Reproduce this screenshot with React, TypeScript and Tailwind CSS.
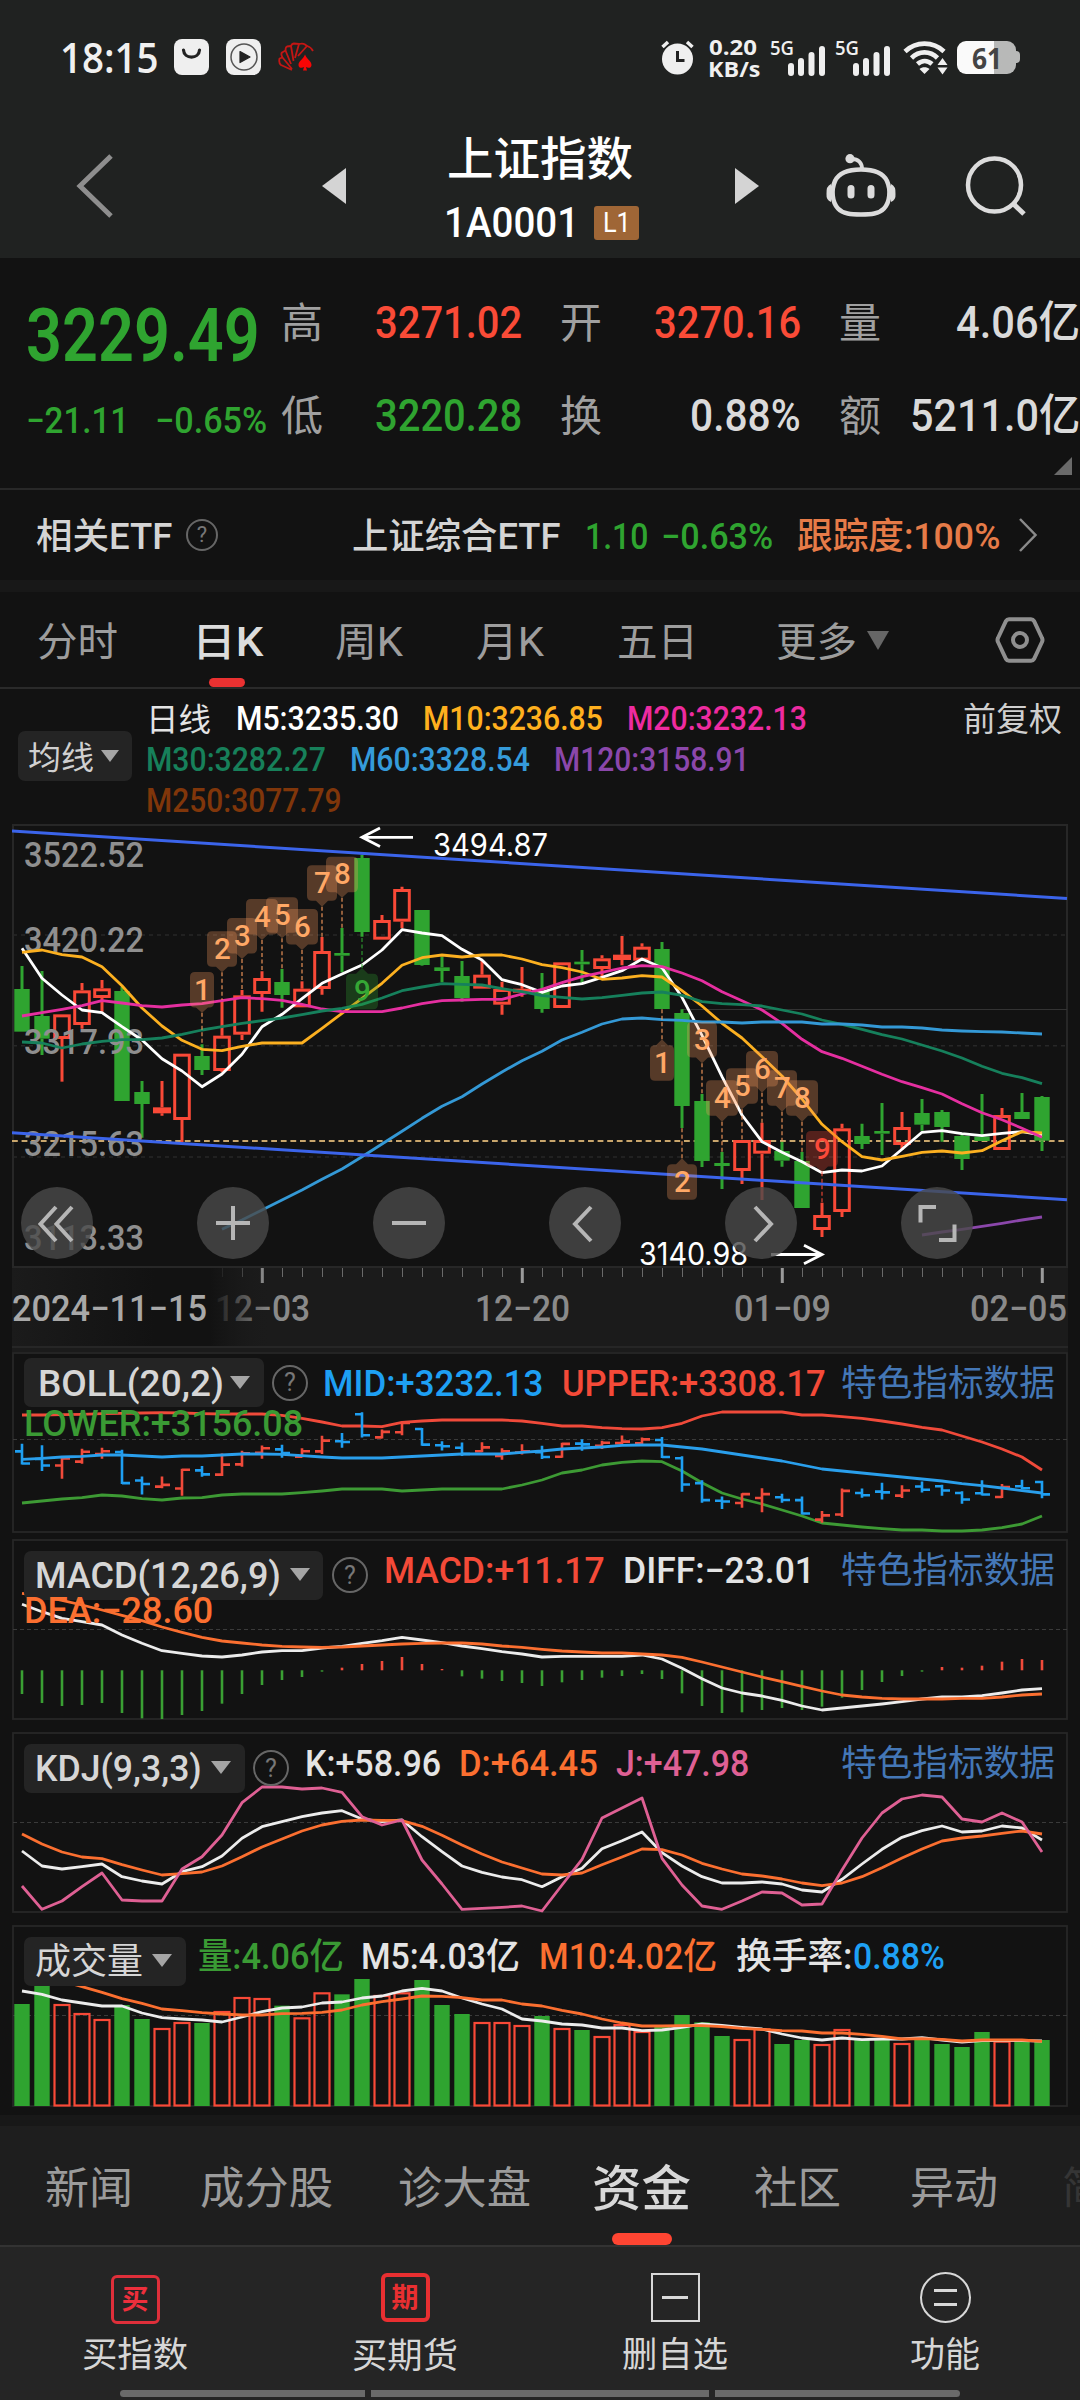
import React, { useLayoutEffect, useRef } from "react";
import type { ReactNode } from "react";

/* Squeezes a line of text to the width of its box. */
function Fit({ className, children }: { className: string; children: ReactNode }) {
  const box = useRef<HTMLSpanElement>(null);
  const text = useRef<HTMLSpanElement>(null);
  useLayoutEffect(() => {
    const b = box.current;
    const t = text.current;
    if (b && t && t.offsetWidth > 0) {
      t.style.transform = `scaleX(${b.clientWidth / t.offsetWidth})`;
    }
  });
  return (
    <span ref={box} className={`block shrink-0 whitespace-nowrap leading-none ${className}`}>
      <span ref={text} className="inline-block origin-left align-top leading-none">
        {children}
      </span>
    </span>
  );
}

const GREEN = "#2fa430";
const RED = "#f94937";

/* ---------- chart data: [up, high, bodyTop, bodyBottom, low] ---------- */
type Candle = [number, number, number, number, number];
const candles: Candle[] = [
  [0, 468, 537, 665, 665], [0, 483, 618, 686, 735], [1, 613, 613, 687, 815], [1, 519, 541, 645, 656],
  [1, 510, 535, 564, 605], [0, 530, 543, 873, 873], [0, 813, 846, 882, 983], [1, 813, 892, 910, 917],
  [1, 731, 731, 930, 997], [0, 703, 738, 780, 795], [1, 570, 677, 783, 787], [1, 540, 556, 674, 690],
  [1, 484, 504, 552, 605], [0, 477, 516, 555, 593], [1, 514, 536, 592, 592], [1, 381, 423, 537, 554],
  [0, 354, 429, 437, 487], [0, 134, 144, 366, 380], [1, 315, 330, 389, 389], [1, 230, 237, 335, 355],
  [0, 300, 300, 465, 467], [0, 440, 472, 483, 517], [0, 453, 498, 564, 575], [1, 452, 494, 536, 536],
  [1, 515, 537, 584, 614], [1, 471, 536, 548, 560], [0, 489, 545, 597, 608], [1, 457, 457, 594, 594],
  [0, 420, 455, 463, 520], [1, 436, 445, 477, 500], [1, 378, 434, 450, 466], [1, 400, 410, 452, 452],
  [0, 396, 417, 597, 597], [0, 598, 609, 888, 954], [0, 852, 873, 1053, 1071], [0, 1026, 1059, 1068, 1137],
  [1, 990, 990, 1083, 1122], [1, 938, 990, 1031, 1170], [0, 995, 1023, 1052, 1070], [0, 1026, 1053, 1194, 1194],
  [1, 1178, 1215, 1260, 1281], [1, 941, 955, 1206, 1221], [0, 941, 978, 1002, 1017], [0, 879, 963, 971, 1035],
  [1, 906, 951, 1005, 1020], [0, 867, 909, 944, 962], [0, 900, 906, 951, 995], [0, 970, 978, 1047, 1080],
  [0, 852, 980, 993, 993], [1, 894, 915, 1020, 1020], [0, 849, 906, 927, 927], [0, 858, 861, 992, 1023],
];
const m5 = [415, 505, 555, 600, 608, 650, 690, 746, 783, 830, 792, 733, 650, 613, 566, 520, 492, 465, 420, 359, 369, 377, 418, 450, 509, 524, 547, 528, 521, 502, 482, 447, 473, 562, 676, 800, 915, 995, 1027, 1055, 1088, 1080, 1083, 1068, 1018, 967, 962, 971, 977, 970, 965, 975];
const m10 = [427, 420, 434, 441, 470, 527, 594, 648, 691, 718, 722, 709, 699, 699, 699, 655, 610, 565, 520, 466, 443, 435, 441, 435, 435, 447, 464, 473, 486, 508, 504, 497, 501, 542, 588, 640, 684, 740, 798, 867, 943, 995, 1040, 1050, 1039, 1027, 1023, 1029, 1022, 992, 965, 969];
const m20 = [618, 608, 598, 587, 572, 579, 587, 591, 585, 581, 572, 563, 566, 571, 583, 597, 605, 605, 605, 594, 581, 572, 570, 568, 568, 552, 538, 518, 500, 487, 474, 467, 470, 489, 512, 545, 572, 600, 640, 688, 725, 745, 769, 793, 815, 833, 852, 881, 908, 929, 955, 982];
const m30 = [696, 699, 714, 702, 694, 689, 689, 684, 673, 660, 650, 640, 632, 624, 614, 603, 595, 583, 564, 542, 531, 521, 523, 525, 536, 545, 557, 562, 567, 563, 556, 549, 546, 556, 575, 581, 584, 588, 600, 612, 630, 643, 658, 674, 687, 705, 723, 744, 769, 790, 803, 821];
const m60 = [1258, 1230, 1200, 1170, 1140, 1108, 1077, 1040, 1002, 964, 925, 889, 860, 822, 786, 752, 724, 690, 667, 642, 627, 624, 629, 631, 636, 636, 639, 636, 636, 636, 642, 642, 645, 651, 651, 654, 660, 663, 665, 666, 669, 672];
const m120 = [1275, 1266, 1258, 1249, 1240, 1230, 1221];

const bollUp = [210, 210, 209, 208, 206, 205, 204, 203, 204, 206, 207, 207, 207, 211, 220, 231, 243, 243, 245, 232, 228, 225, 225, 225, 225, 228, 235, 243, 243, 248, 251, 252, 248, 235, 213, 201, 201, 201, 201, 210, 210, 215, 220, 228, 237, 247, 255, 273, 291, 312, 336, 375];
const bollMid = [343, 340, 336, 334, 330, 330, 333, 336, 333, 333, 330, 327, 327, 328, 332, 336, 339, 339, 339, 336, 333, 330, 327, 327, 327, 322, 318, 312, 309, 306, 301, 300, 300, 306, 312, 321, 330, 339, 348, 360, 372, 378, 384, 390, 396, 402, 408, 416, 422, 429, 437, 444];
const bollLow = [474, 468, 462, 458, 450, 453, 461, 465, 459, 458, 450, 447, 447, 447, 443, 438, 432, 432, 432, 438, 435, 432, 432, 432, 432, 420, 405, 384, 375, 360, 352, 348, 350, 378, 413, 444, 462, 477, 495, 513, 534, 540, 546, 551, 555, 555, 558, 558, 555, 548, 537, 513];

const diff = [778, 800, 820, 830, 840, 870, 895, 917, 925, 933, 936, 930, 921, 917, 917, 909, 904, 895, 887, 877, 885, 893, 903, 911, 920, 927, 936, 934, 934, 934, 934, 930, 942, 970, 1001, 1029, 1044, 1053, 1066, 1083, 1095, 1089, 1083, 1077, 1070, 1062, 1056, 1056, 1052, 1044, 1035, 1031];
const dea = [745, 753, 766, 780, 795, 811, 827, 846, 862, 877, 888, 894, 900, 904, 906, 907, 906, 903, 900, 897, 895, 894, 894, 897, 903, 907, 913, 918, 921, 924, 924, 927, 930, 937, 951, 966, 981, 996, 1010, 1024, 1038, 1050, 1056, 1060, 1062, 1062, 1062, 1060, 1060, 1056, 1050, 1047];
const macd = [1047, 1074, 1083, 1080, 1074, 1104, 1120, 1122, 1110, 1098, 1076, 1047, 1020, 1005, 996, 980, 968, 957, 948, 936, 957, 972, 994, 1001, 1008, 1014, 1023, 1012, 1005, 998, 993, 987, 1002, 1045, 1083, 1104, 1102, 1095, 1089, 1095, 1085, 1058, 1035, 1011, 993, 980, 966, 968, 962, 950, 942, 945];

const kLine = [393, 438, 447, 440, 432, 470, 483, 492, 455, 440, 408, 355, 320, 305, 290, 279, 272, 297, 305, 300, 350, 395, 438, 457, 471, 479, 500, 470, 445, 386, 362, 336, 398, 438, 470, 489, 489, 486, 492, 510, 516, 478, 432, 388, 352, 332, 318, 336, 333, 318, 324, 360];
const dLine = [342, 372, 396, 411, 416, 434, 450, 465, 461, 456, 438, 410, 381, 357, 333, 315, 304, 300, 301, 302, 319, 346, 375, 402, 426, 444, 462, 465, 459, 434, 411, 387, 389, 405, 430, 447, 462, 468, 477, 489, 497, 489, 470, 443, 414, 387, 363, 354, 348, 340, 333, 342];
const jLine = [498, 568, 543, 500, 459, 540, 543, 543, 447, 410, 345, 248, 201, 201, 207, 204, 217, 290, 315, 300, 420, 492, 568, 565, 562, 558, 573, 495, 418, 294, 264, 234, 415, 495, 558, 568, 543, 516, 519, 555, 552, 450, 354, 279, 237, 225, 231, 297, 306, 279, 306, 396];

const vol = [852, 798, 855, 882, 900, 855, 897, 927, 909, 909, 876, 834, 837, 857, 895, 820, 823, 777, 828, 820, 780, 855, 882, 909, 909, 918, 888, 927, 930, 951, 915, 936, 918, 885, 907, 948, 960, 928, 972, 960, 975, 930, 960, 955, 972, 958, 972, 981, 936, 965, 963, 960];
const vol5 = [813, 823, 840, 849, 858, 858, 879, 893, 897, 900, 906, 891, 875, 864, 861, 849, 846, 834, 828, 813, 805, 813, 834, 852, 867, 897, 903, 912, 915, 924, 924, 932, 930, 922, 912, 916, 922, 927, 942, 954, 960, 954, 959, 957, 957, 953, 960, 966, 962, 962, 962, 963];
const vol10 = [783, 800, 817, 836, 850, 867, 872, 878, 882, 885, 885, 881, 880, 877, 870, 855, 845, 837, 828, 829, 833, 840, 840, 852, 858, 871, 882, 897, 909, 918, 918, 917, 917, 920, 925, 928, 932, 933, 939, 939, 943, 949, 957, 956, 958, 963, 960, 960, 960, 964];

const cx = (i: number) => 22 + 20 * i;

function Line({ data, base, from = 0, color, w = 2.8 }: { data: number[]; base: number; from?: number; color: string; w?: number }) {
  return (
    <polyline
      points={data.map((v, i) => `${cx(i + from)},${(base + v / 3).toFixed(1)}`).join(" ")}
      fill="none"
      stroke={color}
      strokeWidth={w}
      strokeLinejoin="round"
    />
  );
}

function Label({ x, y, w, size, color, children, font = "Roboto", weight = 500 }: { x: number; y: number; w: number; size: number; color: string; children: string; font?: string; weight?: number }) {
  return (
    <text x={x} y={y} textLength={w} lengthAdjust="spacingAndGlyphs" fontSize={size} fontWeight={weight} fill={color} fontFamily={`${font}, sans-serif`}>
      {children}
    </text>
  );
}

/* Numbered marker: index, digit, box top, tip, end of the dotted stem */
type Mark = [number, string, number, number, number, string];
const marks: Mark[] = [
  [9, "1", 486, 608, 703, "o"], [10, "2", 364, 487, 570, "o"], [11, "3", 324, 447, 540, "o"],
  [12, "4", 267, 390, 484, "o"], [13, "5", 262, 385, 477, "o"], [14, "6", 297, 420, 514, "o"],
  [15, "7", 166, 290, 381, "o"], [16, "8", 140, 263, 354, "o"], [17, "9", 491, 474, 380, "g"],
  [32, "1", 706, 688, 597, "o"], [33, "2", 1063, 1045, 954, "o"], [34, "3", 636, 760, 852, "o"],
  [35, "4", 811, 935, 1026, "o"], [36, "5", 775, 898, 990, "o"], [37, "6", 723, 848, 938, "o"],
  [38, "7", 781, 905, 995, "o"], [39, "8", 811, 935, 1026, "o"], [40, "9", 963, 1087, 1178, "r"],
];
const markFill: Record<string, string> = { o: "#ff9f5f", g: "#2fa430", r: "#f94937" };
const markText: Record<string, string> = { o: "#ffa866", g: "#35a835", r: "#fb4a3a" };

function Marker({ m }: { m: Mark }) {
  const [i, d, top, tip, stem, tone] = m;
  const x = cx(i);
  const y = 810 + top / 3;
  const t = 810 + tip / 3;
  const w = d === "1" ? 24 : d === "2" || d === "3" || d === "7" ? 30 : 32;
  const up = tip < top;
  const l = x - w / 2;
  const r = x + w / 2;
  const b = y + 35.5;
  const shape = up
    ? `M${l + 5} ${y}H${x - 6}L${x} ${t}L${x + 6} ${y}H${r - 5}Q${r} ${y} ${r} ${y + 5}V${b - 5}Q${r} ${b} ${r - 5} ${b}H${l + 5}Q${l} ${b} ${l} ${b - 5}V${y + 5}Q${l} ${y} ${l + 5} ${y}Z`
    : `M${l + 5} ${y}H${r - 5}Q${r} ${y} ${r} ${y + 5}V${b - 5}Q${r} ${b} ${r - 5} ${b}H${x + 6}L${x} ${t}L${x - 6} ${b}H${l + 5}Q${l} ${b} ${l} ${b - 5}V${y + 5}Q${l} ${y} ${l + 5} ${y}Z`;
  return (
    <g>
      <line x1={x} x2={x} y1={t} y2={810 + stem / 3} stroke={markFill[tone]} strokeOpacity={0.6} strokeWidth={1.8} strokeDasharray="4 2.5" />
      <path d={shape} fill={markFill[tone]} fillOpacity={0.29} />
      <text x={x + 0.5} y={y + 27.5} textAnchor="middle" fontSize={29.5} fontWeight={500} fontFamily="Roboto, sans-serif" fill={markText[tone]}>
        {d}
      </text>
    </g>
  );
}

function MainChart() {
  return (
    <svg viewBox="12 824 1056 444" className="block h-[444px] w-[1056px]">
      <g stroke="#272727" fill="none">
        <rect x={13} y={825} width={1054} height={442} strokeWidth={2} />
        <path d="M13 935H1067M13 1045.7H1067M13 1157H1067" strokeWidth={1.6} strokeDasharray="4 4" />
        <path d="M682 1009.5H1067" strokeWidth={1} stroke="#333" />
      </g>
      <line x1={12} x2={1067} y1={1141} y2={1141} stroke="#c9a66c" strokeWidth={2} strokeDasharray="5.8 3.8" />
      {candles.map(([up, h, t, b, l], i) => {
        const x = cx(i);
        const [hy, ty, by, ly] = [h, t, b, l].map((v) => 810 + v / 3);
        const c = up ? RED : GREEN;
        const solid = !up || b - t < 20;
        return (
          <g key={i}>
            <path d={`M${x} ${hy}V${ty}M${x} ${by}V${ly}`} stroke={c} strokeWidth={3} />
            {solid ? (
              <rect x={x - (up ? 9 : 7.7)} y={ty} width={up ? 18 : 15.4} height={by - ty} fill={c} />
            ) : (
              <rect x={x - 7.3} y={ty + 1.5} width={14.6} height={by - ty - 3} fill="none" stroke={c} strokeWidth={3} />
            )}
          </g>
        );
      })}
      <Label x={24} y={867} w={120} size={35} color="#8f8f8f">3522.52</Label>
      <Label x={24} y={952} w={120} size={35} color="#8f8f8f">3420.22</Label>
      <Label x={24} y={1054} w={120} size={35} color="#8f8f8f">3317.93</Label>
      <Label x={24} y={1156} w={120} size={35} color="#8f8f8f">3215.63</Label>
      <Label x={24} y={1250} w={120} size={35} color="#8f8f8f">3113.33</Label>
      <Line data={m5} base={810} color="#ffffff" />
      <Line data={m10} base={810} color="#fcb020" />
      <Line data={m20} base={810} color="#e52fa0" />
      <Line data={m30} base={810} color="#16805c" />
      <Line data={m60} base={810} from={10} color="#3499d6" />
      <Line data={m120} base={810} from={45} color="#8b47ab" />
      <path d="M12 831L1067 898.5M12 1132.7L1067 1199.7" stroke="#3b64ea" strokeWidth={3} />
      {marks.map((m, i) => (
        <Marker key={i} m={m} />
      ))}
      <g stroke="#fff" strokeWidth={2.8} fill="none">
        <path d="M413 837.3H362M380 828L362 837.3L380 846.6" />
        <path d="M771 1254.5H822M804 1245.2L822 1254.5L804 1263.8" />
      </g>
      <Label x={433} y={856} w={115} size={31} color="#fff" font="Inter" weight={400}>3494.87</Label>
      <Label x={639} y={1265} w={109} size={31} color="#fff" font="Inter" weight={400}>3140.98</Label>
    </svg>
  );
}

function TimeAxis() {
  return (
    <svg viewBox="12 1268 1056 84" className="block h-[84px] w-[1056px]">
      <defs>
        <linearGradient id="fade" gradientUnits="userSpaceOnUse" x1={12} x2={272} y1={0} y2={0}>
          <stop offset="0" stopColor="#1b1b1b" />
          <stop offset="0.55" stopColor="#121212" />
          <stop offset="0.76" stopColor="#121212" />
          <stop offset="1" stopColor="#1b1b1b" stopOpacity="0" />
        </linearGradient>
      </defs>
      <rect x={12} y={1268} width={1056} height={84} fill="#1b1b1b" />
      {candles.map((_, i) =>
        i < 10 ? null : (i - 12) % 13 === 0 ? (
          <rect key={i} x={cx(i) - 1.2} y={1268} width={3} height={15} fill="#9a9a9a" />
        ) : (
          <rect key={i} x={cx(i)} y={1268} width={1} height={9} fill="#6a6a6a" />
        ),
      )}
      <Label x={215} y={1321} w={95} size={36} color="#8a8a8a">12−03</Label>
      <Label x={475} y={1321} w={95} size={36} color="#8a8a8a">12−20</Label>
      <Label x={734} y={1321} w={97} size={36} color="#8a8a8a">01−09</Label>
      <Label x={970} y={1321} w={97} size={36} color="#8a8a8a">02−05</Label>
      <rect x={12} y={1268} width={260} height={79} fill="url(#fade)" />
      <Label x={12} y={1321} w={195} size={36} color="#a8a8a8">2024−11−15</Label>
      <rect x={12} y={1346} width={1056} height={2} fill="#262626" />
    </svg>
  );
}

function Frame({ top, h, grid, children }: { top: number; h: number; grid: number; children: ReactNode }) {
  return (
    <svg viewBox={`12 ${top} 1056 ${h}`} className="absolute inset-0 h-full w-full">
      <rect x={13} y={top + 1} width={1054} height={h - 2} fill="none" stroke="#272727" strokeWidth={1.8} />
      <path d={`M13 ${grid}H1067`} stroke="#3a3a3a" strokeWidth={1} strokeDasharray="4 3" />
      {children}
    </svg>
  );
}

function BollChart() {
  const y = (v: number) => 1345 + (205 + (v - 134) * 0.2833) / 3;
  return (
    <Frame top={1352} h={181} grid={1439.5}>
      <Line data={bollUp} base={1345} color="#f04a3a" />
      <Line data={bollLow} base={1345} color="#3d9a34" />
      {candles.map(([up, h, t, b, l], i) => {
        const x = cx(i);
        const open = y(up ? b : t);
        const close = y(up ? t : b);
        return (
          <path
            key={i}
            d={`M${x} ${y(h) - 1}V${y(l) + 1}M${x - 7} ${open}H${x}M${x} ${close}H${x + 8}`}
            stroke={up ? "#f04a3a" : "#1e9ff2"}
            strokeWidth={2.6}
          />
        );
      })}
      <Line data={bollMid} base={1345} color="#2a9fec" />
    </Frame>
  );
}

function MacdChart() {
  return (
    <Frame top={1539} h={181} grid={1629.5}>
      {macd.map((v, i) => {
        const z = 1670.3;
        const e = 1345 + v / 3;
        return <path key={i} d={`M${cx(i)} ${z}V${e}`} stroke={e < z ? "#f04a3a" : "#3a9f33"} strokeWidth={2.6} />;
      })}
      <Line data={diff} base={1345} color="#ececec" />
      <Line data={dea} base={1345} color="#fb6f30" />
    </Frame>
  );
}

function KdjChart() {
  return (
    <Frame top={1732} h={181} grid={1822.5}>
      <Line data={kLine} base={1720} color="#ececec" />
      <Line data={dLine} base={1720} color="#fb6f30" />
      <Line data={jLine} base={1720} color="#df6094" />
    </Frame>
  );
}

function VolumeChart() {
  return (
    <Frame top={1925} h={182} grid={2015.5}>
      {vol.map((v, i) => {
        const t = 1720 + v / 3;
        const x = cx(i);
        return candles[i][0] ? (
          <rect key={i} x={x - 7.5} y={t} width={15} height={2105.5 - t} fill="none" stroke={RED} strokeWidth={2.2} />
        ) : (
          <rect key={i} x={x - 7.7} y={t} width={15.4} height={2106 - t} fill={GREEN} />
        );
      })}
      <Line data={vol5} base={1720} color="#ececec" />
      <Line data={vol10} base={1720} from={2} color="#fb6f30" />
    </Frame>
  );
}

function Caret({ className }: { className: string }) {
  return (
    <svg viewBox="0 0 20 13" preserveAspectRatio="none" className={className}>
      <path d="M0 0H20L10 13Z" fill="currentColor" />
    </svg>
  );
}

function Help({ className }: { className: string }) {
  return (
    <span className={`flex shrink-0 items-center justify-center rounded-full border-2 border-[#666] text-[#777] leading-none ${className}`}>?</span>
  );
}

function Picker({ className, textClass, children }: { className: string; textClass: string; children: ReactNode }) {
  return (
    <button className={`ml-[12px] flex h-[49px] shrink-0 items-center rounded-[7px] bg-[#242424] pl-[11px] text-[36px] text-[#d6d6d6] ${className}`}>
      <Fit className={`mt-[2px] ${textClass}`}>{children}</Fit>
      <Caret className="mt-[-1px] ml-[9px] h-[13px] w-[20px] text-[#a5a5a5]" />
    </button>
  );
}

function FeatureLink() {
  return <Fit className="mt-[2px] mr-[13px] ml-auto w-[214px] text-[36px] font-normal text-[#4477b6]">特色指标数据</Fit>;
}

const zoomIcons = [
  "M35 20L19.5 37L35 54M51 20L35.500 37L51 54",
  "M19 36H53M36 19V53",
  "M19 36H53",
  "M42 20L26 37L42 54",
  "M30 20L46 37L30 54",
  "M35 20H19.500V35.500M38 53H53.500V37.500",
];

function StatusBar() {
  return (
    <div className="flex h-[114px] items-center font-['Open_Sans',sans-serif] font-bold text-[#f0f0f0]">
      <Fit className="ml-[60px] w-[99px] text-[42px] font-semibold">18:15</Fit>
      <svg viewBox="0 0 35 36" className="ml-[15px] h-[36px] w-[35px]">
        <rect width="35" height="36" rx="8" fill="#efefef" />
        <path d="M9.500 11C10 20.500 25 20.500 25.500 11" fill="none" stroke="#222" strokeWidth="3.200" strokeLinecap="round" />
      </svg>
      <svg viewBox="0 0 35 36" className="ml-[17px] h-[36px] w-[35px]">
        <rect width="35" height="36" rx="8" fill="#efefef" />
        <circle cx="18" cy="18" r="13" fill="none" stroke="#555" strokeWidth="1.500" />
        <path d="M14 12.500L24 18L14 23.500Z" fill="#222" stroke="#222" strokeWidth="1.200" strokeLinejoin="round" />
      </svg>
      <svg viewBox="0 0 36 30" className="ml-[17px] h-[30px] w-[36px]">
        <g fill="none" stroke="#c41614" strokeWidth="1.800" strokeLinejoin="round">
          <path d="M14 28L3 23Q0.500 21 1.500 16.500L4.500 15.500L14 27" />
          <path d="M4.500 15.500Q2.500 12 4 10.500L7.500 8.500L13 22" />
          <path d="M7.500 8.500Q7.500 5 9 4.500L13 4L15.500 19" />
          <path d="M13 4Q14 1.500 16 1.500L21 2L17 16" />
          <path d="M21 2Q25 1 27 2.500L29 4L20 14" />
          <path d="M29 4Q33 5 35 9" />
        </g>
        <path d="M27 12.500C28.500 17 33.500 19 33.500 23C33.500 26 30 26.500 28 25L29 28.500H25L26 25C24 26.500 20.500 26 20.500 23C20.500 19 25.500 17 27 12.500Z" fill="#fa0505" />
      </svg>
      <svg viewBox="0 0 35 35" className="ml-[346px] h-[35px] w-[35px]">
        <circle cx="17.500" cy="19" r="15.500" fill="#efefef" />
        <path d="M2.500 7L8 2M32.500 7L27 2" stroke="#efefef" strokeWidth="3.500" />
        <path d="M17.500 11V20.500H24.500" fill="none" stroke="#222" strokeWidth="3" />
      </svg>
      <div className="ml-[13px] flex flex-col">
        <Fit className="ml-px w-[48px] text-[22px]">0.20</Fit>
        <Fit className="w-[52px] text-[22px]">KB/s</Fit>
      </div>
      {["ml-[10px]", "ml-[10px]"].map((m, i) => (
        <div key={i} className={`flex h-[38px] shrink-0 ${m}`}>
          <Fit className="w-[24px] text-[20px] font-semibold">5G</Fit>
          <svg viewBox="0 0 38 32" className="mt-[7px] ml-[-7px] h-[32px] w-[38px]">
            <path d="M4 28V21M14 28V16M24.500 28V10M35 28V4" stroke="#efefef" strokeWidth="6" strokeLinecap="round" />
          </svg>
        </div>
      ))}
      <svg viewBox="0 0 46 35" className="ml-[13px] h-[35px] w-[46px]">
        <g fill="none" stroke="#efefef" strokeWidth="4.600">
          <path d="M2 11.500C13 1 30 1 41 11.500" />
          <path d="M8.500 18C16 10.500 27 10.500 34.500 18" />
          <path d="M14.500 24C19 20 24.500 20 29 24" />
        </g>
        <path d="M16.500 29C19 26.500 24 26.500 26.500 29L21.500 34Z" fill="#efefef" />
        <path d="M34.500 25L39.500 18L44.500 25ZM34.500 27.500H44.500L39.500 34.500Z" fill="#efefef" />
      </svg>
      <div className="ml-[8px] flex h-[33px] w-[59px] items-center justify-center rounded-[9px] bg-gradient-to-r from-[#fafafa] from-[62%] to-[#b8b9b8] to-[62%] text-[#444]">
        <Fit className="w-[30px] text-[29px]">61</Fit>
      </div>
      <div className="h-[12px] w-[4px] rounded-r-full bg-[#b8b9b8]" />
    </div>
  );
}

function TitleBar() {
  return (
    <div className="flex h-[144px] items-center text-white">
      <svg viewBox="0 0 38 64" className="ml-[76px] h-[64px] w-[38px]">
        <path d="M35 2L4 32L35 62" fill="none" stroke="#8e8e8e" strokeWidth="5" />
      </svg>
      <svg viewBox="0 0 24 36" className="ml-[208px] h-[36px] w-[24px]">
        <path d="M24 0V36L0 18Z" fill="#d4d4d4" />
      </svg>
      <div className="ml-[98px] flex h-[144px] w-[195px] flex-col pt-[22px]">
        <Fit className="ml-[3px] w-[186px] text-[46px] font-medium">上证指数</Fit>
        <div className="mt-[20px] flex items-center">
          <Fit className="w-[135px] text-[42px] font-medium">1A0001</Fit>
          <span className="ml-[15px] flex h-[34px] w-[45px] items-center justify-center rounded-[3px] bg-[#9f6636]">
            <Fit className="w-[28px] text-[28px]">L1</Fit>
          </span>
        </div>
      </div>
      <svg viewBox="0 0 24 36" className="ml-[96px] h-[36px] w-[24px]">
        <path d="M0 0V36L24 18Z" fill="#d4d4d4" />
      </svg>
      <svg viewBox="0 0 70 64" className="ml-[67px] h-[64px] w-[70px]">
        <g fill="none" stroke="#dcdcdc" strokeWidth="4.500">
          <path d="M35 15.500C48 15.500 57 18.500 61 27C65 36 64 48 58 54.500C53 60 45 60.500 35 60.500C25 60.500 17 60 12 54.500C6 48 5 36 9 27C13 18.500 22 15.500 35 15.500Z" />
          <path d="M36 15C36 9 32 5 26 5" strokeWidth="4" />
        </g>
        <path d="M5 30Q0 32 0.500 40Q0 46 5 48ZM65 30Q70 32 69.500 40Q70 46 65 48Z" fill="#dcdcdc" />
        <circle cx="24" cy="4.700" r="4.600" fill="#dcdcdc" />
        <path d="M25 34.500V41M45 34.500V41" stroke="#dcdcdc" strokeWidth="7" strokeLinecap="round" />
      </svg>
      <svg viewBox="0 0 62 62" className="ml-[69px] h-[62px] w-[62px]">
        <circle cx="29.500" cy="30" r="26.500" fill="none" stroke="#dcdcdc" strokeWidth="4.500" />
        <path d="M48 48.500L59 59" stroke="#dcdcdc" strokeWidth="5" />
      </svg>
    </div>
  );
}

const quotes: { k: string; v: string; w: string; c: string }[] = [
  { k: "高", v: "3271.02", w: "w-[147px]", c: "text-[#fa4b37]" },
  { k: "开", v: "3270.16", w: "w-[147px]", c: "text-[#fa4b37]" },
  { k: "量", v: "4.06亿", w: "w-[124px]", c: "text-[#dadada]" },
  { k: "低", v: "3220.28", w: "w-[147px]", c: "text-[#2fa430]" },
  { k: "换", v: "0.88%", w: "w-[111px]", c: "text-[#dadada]" },
  { k: "额", v: "5211.0亿", w: "w-[170px]", c: "text-[#dadada]" },
];

export default function App() {
  return (
    <div className="flex h-[2400px] w-[1080px] flex-col overflow-hidden bg-[#121212] font-[Roboto,'Noto_Sans_CJK_SC',sans-serif]">
      <header className="h-[258px] shrink-0 bg-[#202221]">
        <StatusBar />
        <TitleBar />
      </header>

      <section className="relative flex h-[232px] shrink-0 border-b-2 border-[#282828]">
        <div className="flex w-[281px] shrink-0 flex-col pl-[26px] text-[#2fa430]">
          <Fit className="mt-[41px] w-[234px] text-[74px] font-semibold">3229.49</Fit>
          <div className="mt-[30px] flex font-medium">
            <Fit className="w-[103px] text-[36px]">−21.11</Fit>
            <Fit className="ml-[26px] w-[112px] text-[36px]">−0.65%</Fit>
          </div>
        </div>
        <div className="grid h-[204px] grid-cols-[241px_241px_241px] grid-rows-[93px_93px] gap-x-[38px] pt-[18px]">
          {quotes.map((q) => (
            <div key={q.k} className="flex items-center justify-between">
              <Fit className="mt-[2px] w-[42px] text-[42px] text-[#a0a0a0]">{q.k}</Fit>
              <Fit className={`${q.w} ${q.c} text-[44px] font-medium`}>{q.v}</Fit>
            </div>
          ))}
        </div>
        <svg viewBox="0 0 18 18" className="absolute right-[8px] bottom-[13px] h-[18px] w-[18px]">
          <path d="M18 0V18H0Z" fill="#6a6a6a" />
        </svg>
      </section>

      <section className="flex h-[90px] shrink-0 items-center pt-[3px] text-[36px] font-medium">
        <Fit className="ml-[36px] w-[136px] text-[#d4d4d4]">相关ETF</Fit>
        <Help className="mt-[-3px] ml-[14px] size-[32px] text-[22px] font-normal" />
        <Fit className="ml-[134px] w-[208px] text-[#d4d4d4]">上证综合ETF</Fit>
        <Fit className="ml-[25px] w-[63px] text-[#2fa430]">1.10</Fit>
        <Fit className="ml-[13px] w-[112px] text-[#2fa430]">−0.63%</Fit>
        <Fit className="ml-[24px] w-[203px] text-[#e67b48]">跟踪度:100%</Fit>
        <svg viewBox="0 0 20 34" className="mt-[-3px] ml-[18px] h-[34px] w-[20px]">
          <path d="M2 1L17.500 17L2 33" fill="none" stroke="#8a8a8a" strokeWidth="2.500" />
        </svg>
      </section>
      <div className="h-[12px] shrink-0 bg-[#181818]" />

      <nav className="relative flex h-[97px] shrink-0 items-center border-b-2 border-[#2a2a2a] pt-[6px] text-[40px] text-[#9d9d9d]">
        <Fit className="ml-[37px] w-[81px]">分时</Fit>
        <Fit className="ml-[74px] w-[71px] font-medium text-[#dcdcdc]">日K</Fit>
        <Fit className="ml-[72px] w-[68px]">周K</Fit>
        <Fit className="ml-[73px] w-[68px]">月K</Fit>
        <Fit className="ml-[73px] w-[81px]">五日</Fit>
        <Fit className="ml-[78px] w-[81px]">更多</Fit>
        <Caret className="mt-[-5px] ml-[10px] h-[19px] w-[22px] text-[#666]" />
        <svg viewBox="0 0 50 46" className="mt-[-5px] ml-[106px] h-[46px] w-[50px]">
          <path d="M14 2.200H36Q38 2.200 39 4L47 21Q48 23 47 25L39 42Q38 43.800 36 43.800H14Q12 43.800 11 42L3 25Q2 23 3 21L11 4Q12 2.200 14 2.200Z" fill="none" stroke="#8f8f8f" strokeWidth="4" />
          <circle cx="25" cy="23" r="7" fill="none" stroke="#8f8f8f" strokeWidth="4" />
        </svg>
        <span className="absolute bottom-0 left-[209px] h-[9px] w-[36px] rounded-full bg-[#ea3131]" />
      </nav>

      <section className="flex h-[135px] shrink-0 text-[33px]">
        <button className="mt-[42px] ml-[18px] flex h-[50px] w-[114px] items-center rounded-[7px] bg-[#242424] pl-[9px] text-[#d0d0d0]">
          <Fit className="mt-[3px] w-[66px] text-[32px]">均线</Fit>
          <Caret className="ml-[8px] h-[12px] w-[18px] text-[#a5a5a5]" />
        </button>
        <div className="ml-[14px] flex flex-1 flex-col pt-[9px] font-medium">
          <div className="flex h-[41px] items-center">
            <Fit className="mt-[2px] w-[65px] text-[32px] font-normal text-[#e4e4e4]">日线</Fit>
            <Fit className="ml-[25px] w-[163px] text-white">M5:3235.30</Fit>
            <Fit className="ml-[24px] w-[180px] text-[#ffb01e]">M10:3236.85</Fit>
            <Fit className="ml-[24px] w-[180px] text-[#ee2ba0]">M20:3232.13</Fit>
            <Fit className="mt-[2px] mr-[18px] ml-auto w-[99px] text-[33px] font-normal text-[#cfcfcf]">前复权</Fit>
          </div>
          <div className="flex h-[41px] items-center">
            <Fit className="w-[180px] text-[#17805a]">M30:3282.27</Fit>
            <Fit className="ml-[24px] w-[180px] text-[#359bda]">M60:3328.54</Fit>
            <Fit className="ml-[24px] w-[196px] text-[#8b47ab]">M120:3158.91</Fit>
          </div>
          <div className="flex h-[41px] items-center">
            <Fit className="w-[196px] text-[#80360a]">M250:3077.79</Fit>
          </div>
        </div>
      </section>

      <section className="relative ml-[12px] shrink-0">
        <MainChart />
        <TimeAxis />
        <div className="absolute top-[363px] left-[9px] flex gap-[104px]">
          {zoomIcons.map((d) => (
            <button key={d} className="size-[72px] rounded-full bg-[#4a4a4a]/80">
              <svg viewBox="0 0 72 72" className="size-[72px]">
                <path d={d} fill="none" stroke="#b6b6b6" strokeWidth="4" />
              </svg>
            </button>
          ))}
        </div>
      </section>

      <section className="relative ml-[12px] h-[181px] w-[1056px] shrink-0">
        <BollChart />
        <div className="relative flex h-[61px] items-center text-[36px] font-medium">
          <Picker className="w-[240px]" textClass="w-[186px]">BOLL(20,2)</Picker>
          <Help className="ml-[8px] size-[36px] text-[25px] font-normal" />
          <Fit className="mt-[2px] ml-[15px] w-[220px] text-[#1ea0f4]">MID:+3232.13</Fit>
          <Fit className="mt-[2px] ml-[19px] w-[264px] text-[#f44a38]">UPPER:+3308.17</Fit>
          <FeatureLink />
        </div>
        <div className="relative flex h-[22px] items-center text-[36px] font-medium">
          <Fit className="ml-[12px] w-[279px] text-[#3a9a34]">LOWER:+3156.08</Fit>
        </div>
      </section>

      <section className="relative mt-[6px] ml-[12px] h-[181px] w-[1056px] shrink-0">
        <MacdChart />
        <div className="relative flex h-[62px] items-center text-[36px] font-medium">
          <Picker className="mt-[10px] w-[299px]" textClass="w-[246px]">MACD(12,26,9)</Picker>
          <Help className="mt-[10px] ml-[9px] size-[36px] text-[25px] font-normal" />
          <Fit className="mt-px ml-[16px] w-[221px] text-[#f44a38]">MACD:+11.17</Fit>
          <Fit className="mt-px ml-[18px] w-[192px] text-[#e4e4e4]">DIFF:−23.01</Fit>
          <FeatureLink />
        </div>
        <div className="relative flex h-[20px] items-center text-[36px] font-medium">
          <Fit className="ml-[12px] w-[189px] text-[#fb6f30]">DEA:−28.60</Fit>
        </div>
      </section>

      <section className="relative mt-[12px] ml-[12px] h-[181px] w-[1056px] shrink-0">
        <KdjChart />
        <div className="relative flex h-[62px] items-center text-[36px] font-medium">
          <Picker className="mt-[10px] w-[221px]" textClass="w-[167px]">KDJ(9,3,3)</Picker>
          <Help className="mt-[10px] ml-[8px] size-[36px] text-[25px] font-normal" />
          <Fit className="mt-px ml-[16px] w-[136px] text-[#e4e4e4]">K:+58.96</Fit>
          <Fit className="mt-px ml-[18px] w-[139px] text-[#fb6f30]">D:+64.45</Fit>
          <Fit className="mt-px ml-[18px] w-[133px] text-[#df6094]">J:+47.98</Fit>
          <FeatureLink />
        </div>
      </section>

      <section className="relative mt-[12px] ml-[12px] h-[182px] w-[1056px] shrink-0">
        <VolumeChart />
        <div className="relative flex h-[62px] items-center text-[36px] font-medium">
          <Picker className="mt-[10px] w-[162px] font-normal" textClass="w-[108px]">成交量</Picker>
          <Fit className="mt-[2px] ml-[12px] w-[146px] text-[#3a9a34]">量:4.06亿</Fit>
          <Fit className="mt-[2px] ml-[17px] w-[159px] text-[#e4e4e4]">M5:4.03亿</Fit>
          <Fit className="mt-[2px] ml-[19px] w-[178px] text-[#fb6f30]">M10:4.02亿</Fit>
          <Fit className="mt-[2px] ml-[19px] w-[117px] text-[#e4e4e4]">换手率:</Fit>
          <Fit className="mt-[2px] w-[92px] text-[#1ea0f4]">0.88%</Fit>
        </div>
      </section>

      <div className="mt-[8px] h-[11px] shrink-0 bg-[#181818]" />
      <nav className="relative flex h-[121px] shrink-0 items-center overflow-hidden border-b-2 border-[#333] bg-[#1e1e1e] pt-[6px] text-[44px] text-[#9b9b9b]">
        <Fit className="ml-[45px] w-[88px]">新闻</Fit>
        <Fit className="ml-[67px] w-[133px]">成分股</Fit>
        <Fit className="ml-[65px] w-[133px]">诊大盘</Fit>
        <Fit className="mt-[2px] ml-[61px] w-[99px] text-[49px] font-medium text-[#d8d8d8]">资金</Fit>
        <Fit className="ml-[63px] w-[87px]">社区</Fit>
        <Fit className="ml-[69px] w-[88px]">异动</Fit>
        <Fit className="ml-[64px] w-[88px] text-[#353535]">简况</Fit>
        <span className="absolute bottom-0 left-[612px] h-[12px] w-[60px] rounded-full bg-[#ff4532]" />
      </nav>

      <footer className="relative grid flex-1 grid-cols-4 bg-[#252525] text-[35px] text-[#d6d6d6]">
        <div className="flex flex-col items-center pt-[28px]">
          <span className="flex size-[49px] items-center justify-center rounded-[6px] border-3 border-[#df2f3a] pt-px text-[27px] leading-none font-bold text-[#ee2f3c]">买</span>
          <Fit className="mt-[14px] w-[106px]">买指数</Fit>
        </div>
        <div className="flex flex-col items-center pt-[26px]">
          <span className="flex size-[49px] items-center justify-center rounded-[6px] border-4 border-[#e92f31] pt-px text-[27px] leading-none font-bold text-[#e92f31]">期</span>
          <Fit className="mt-[17px] w-[106px]">买期货</Fit>
        </div>
        <div className="flex flex-col items-center pt-[26px]">
          <span className="flex size-[49px] items-center justify-center border-[2.5px] border-[#d8d8d8]">
            <span className="h-[3px] w-[26px] bg-[#d8d8d8]" />
          </span>
          <Fit className="mt-[16px] w-[106px]">删自选</Fit>
        </div>
        <div className="flex flex-col items-center pt-[25px]">
          <span className="flex size-[51px] flex-col items-center justify-center gap-[11px] rounded-full border-[2.5px] border-[#d8d8d8]">
            <span className="h-[3px] w-[23px] bg-[#d8d8d8]" />
            <span className="h-[3px] w-[23px] bg-[#d8d8d8]" />
          </span>
          <Fit className="mt-[15px] w-[70px]">功能</Fit>
        </div>
        <div className="absolute bottom-[3px] left-[120px] flex gap-[6px]">
          <span className="h-[7px] w-[245px] rounded-l-full bg-[#6a6a6a]" />
          <span className="h-[7px] w-[338px] bg-[#6a6a6a]" />
          <span className="h-[7px] w-[245px] rounded-r-full bg-[#6a6a6a]" />
        </div>
      </footer>
    </div>
  );
}
